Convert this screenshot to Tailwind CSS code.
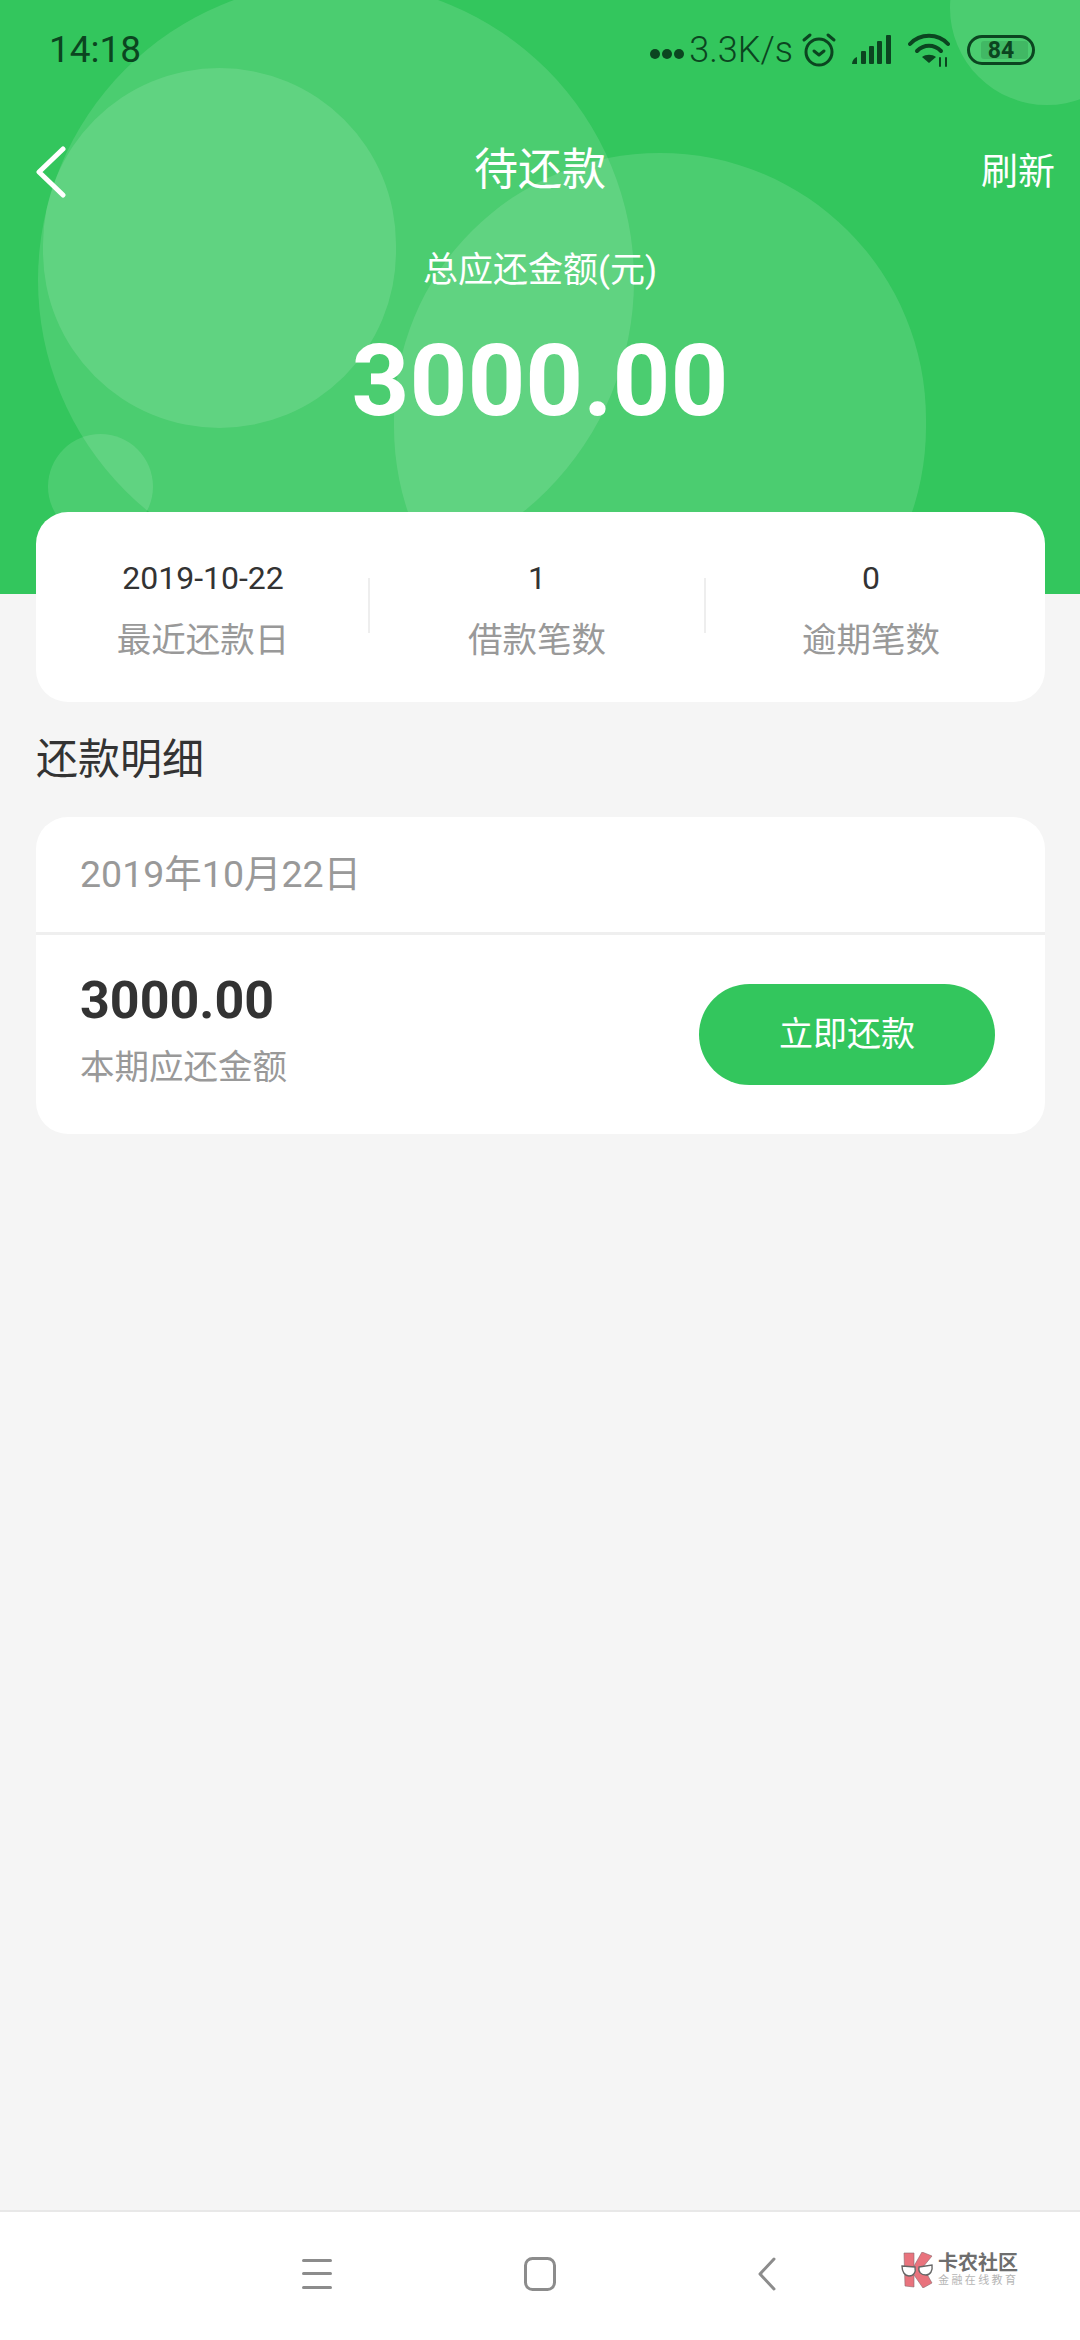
<!DOCTYPE html>
<html lang="zh-CN">
<head>
    <meta charset="UTF-8">
    <meta name="viewport" content="width=device-width, initial-scale=1.0">
    <title>待还款</title>
    <script src="https://cdn.jsdelivr.net/npm/@tailwindcss/browser@4"></script>
</head>
<body class="w-[1080px] h-[2340px] bg-[#f5f5f5] flex flex-col overflow-hidden font-['Roboto','Noto_Sans_CJK_SC',sans-serif]">
    <!-- Green header -->
    <header class="relative h-[594px] shrink-0 bg-[#33c65d] overflow-hidden text-white">
        <div class="absolute left-[38px] top-[-18px] w-[596px] h-[596px] rounded-full bg-white/12"></div>
        <div class="absolute left-[43px] top-[68px] w-[353px] h-[360px] rounded-full bg-white/12"></div>
        <div class="absolute left-[394px] top-[153px] w-[532px] h-[540px] rounded-full bg-white/12"></div>
        <div class="absolute left-[48px] top-[434px] w-[105px] h-[105px] rounded-full bg-white/12"></div>
        <div class="absolute left-[950px] top-[-89px] w-[194px] h-[194px] rounded-full bg-white/12"></div>

        <div class="relative">
            <!-- Status bar -->
            <div class="h-[146px] pt-[28px] pl-[49px] pr-[45px] flex items-start justify-between text-[#0b4520]">
                <span class="text-[37px] leading-[44px]">14:18</span>
                <div class="flex items-center h-[44px]">
                    <div class="flex gap-[2px] mr-[5px] mt-[8px]">
                        <span class="w-[10px] h-[10px] rounded-full bg-[#0b4520]"></span>
                        <span class="w-[10px] h-[10px] rounded-full bg-[#0b4520]"></span>
                        <span class="w-[10px] h-[10px] rounded-full bg-[#0b4520]"></span>
                    </div>
                    <span class="text-[36px] leading-[44px] font-light">3.3K/s</span>
                    <svg class="ml-[8px]" width="36" height="36" viewBox="0 0 36 36" fill="none" stroke="#0b4520" stroke-width="3" stroke-linecap="round" stroke-linejoin="round">
                        <circle cx="18" cy="20" r="13"/>
                        <path d="M13 19l5 4 5-4"/>
                        <path d="M3 8l6-5M33 8l-6-5"/>
                    </svg>
                    <svg class="ml-[15px]" width="40" height="30" viewBox="0 0 40 30" fill="#0b4520">
                        <path d="M0 29c0-3 2-6 5-7v7z"/>
                        <rect x="9" y="16" width="5" height="13" rx="1"/>
                        <rect x="17" y="11" width="5" height="18" rx="1"/>
                        <rect x="25" y="6" width="5" height="23" rx="1"/>
                        <rect x="34" y="0" width="5" height="29" rx="1"/>
                    </svg>
                    <svg class="ml-[16px]" width="44" height="34" viewBox="0 0 44 34" fill="none" stroke="#0b4520" stroke-linecap="round">
                        <path stroke-width="4" d="M2 11C12 0 30 0 40 11"/>
                        <path stroke-width="4" d="M9 18c7-7 17-7 24 0"/>
                        <path fill="#0b4520" stroke="none" d="M21 30l-7-6c4-3 10-3 14 0z"/>
                        <path stroke-width="2" d="M32 25v8M38 25v8"/>
                    </svg>
                    <div class="relative ml-[15px] w-[68px] h-[30px] rounded-full border-[3px] border-[#0b4520] flex items-center justify-center">
                        <div class="absolute left-[11px] top-[3px] w-[47px] h-[18px] rounded-[3px] bg-[#0b4520]/15"></div>
                        <span class="relative text-[23px] leading-none font-bold">84</span>
                    </div>
                </div>
            </div>

            <!-- Title row -->
            <div class="relative h-[48px] flex items-center justify-center">
                <svg class="absolute left-[34px] top-[0px]" width="34" height="52" viewBox="0 0 34 52" fill="none" stroke="#fff" stroke-width="5" stroke-linecap="round" stroke-linejoin="round">
                    <path d="M29 3L5 26l24 23"/>
                </svg>
                <span class="text-[44px] leading-[48px]">待还款</span>
                <span class="absolute right-[25px] top-[3px] text-[37px] leading-[48px]">刷新</span>
            </div>

            <!-- Total -->
            <div class="mt-[53px] text-center text-[35px] leading-[48px]">总应还金额(元)</div>
            <div class="mt-[28px] text-center text-[101px] leading-[116px] font-bold">3000.00</div>
        </div>
    </header>

    <main class="relative flex-1 px-[36px] -mt-[82px]">
        <!-- Summary card -->
        <section class="w-[1009px] h-[190px] bg-white rounded-[32px] pr-[7px] grid grid-cols-3 text-center">
            <div class="pt-[46px]">
                <p class="text-[32px] leading-[40px] text-[#333]">2019-10-22</p>
                <p class="mt-[18px] text-[34.5px] leading-[48px] text-[#999]">最近还款日</p>
            </div>
            <div class="relative pt-[46px]">
                <div class="absolute left-[-2px] top-[66px] w-[2px] h-[55px] bg-[#eee]"></div>
                <p class="text-[32px] leading-[40px] text-[#333]">1</p>
                <p class="mt-[18px] text-[34.5px] leading-[48px] text-[#999]">借款笔数</p>
            </div>
            <div class="relative pt-[46px]">
                <div class="absolute left-0 top-[66px] w-[2px] h-[55px] bg-[#eee]"></div>
                <p class="text-[32px] leading-[40px] text-[#333]">0</p>
                <p class="mt-[18px] text-[34.5px] leading-[48px] text-[#999]">逾期笔数</p>
            </div>
        </section>

        <h2 class="mt-[30px] text-[42px] leading-[56px] text-[#333]">还款明细</h2>

        <!-- Detail card -->
        <section class="mt-[29px] w-[1009px] h-[317px] bg-white rounded-[32px] overflow-hidden">
            <div class="h-[115px] pl-[44px] flex items-center border-b-[3px] border-[#efefef] box-content text-[37.5px] text-[#999]">2019年10月22日</div>
            <div class="pl-[44px] pr-[50px] pt-[36px] flex justify-between">
                <div>
                    <p class="text-[52px] leading-[60px] font-bold text-[#333]">3000.00</p>
                    <p class="mt-[12px] text-[34.5px] leading-[48px] text-[#999]">本期应还金额</p>
                </div>
                <button class="mt-[13px] w-[296px] h-[101px] rounded-full bg-[#33c65d] text-white text-[34px]">立即还款</button>
            </div>
        </section>
    </main>

    <!-- Navigation bar -->
    <nav class="h-[130px] shrink-0 bg-white border-t-2 border-[#e8e8e8] pl-[302px] flex items-center">
        <svg width="30" height="32" viewBox="0 0 30 32" fill="#8c8c8c" class="mt-[-4px]">
            <rect x="0" y="1" width="30" height="3" rx="1.5"/>
            <rect x="0" y="14" width="30" height="3" rx="1.5"/>
            <rect x="0" y="28" width="30" height="3" rx="1.5"/>
        </svg>
        <svg class="ml-[192px] mt-[-4px]" width="32" height="34" viewBox="0 0 32 34" fill="none" stroke="#8c8c8c" stroke-width="3">
            <rect x="1.5" y="1.5" width="29" height="31" rx="7"/>
        </svg>
        <svg class="ml-[202px] mt-[-4px]" width="18" height="34" viewBox="0 0 18 34" fill="none" stroke="#8c8c8c" stroke-width="3" stroke-linecap="round" stroke-linejoin="round">
            <path d="M16 2L2 17l14 15"/>
        </svg>
        <div class="ml-[125px] mt-[-12px] flex items-center">
            <svg width="34" height="36" viewBox="0 0 34 36">
                <path fill="#e9737d" stroke="#8a6a6e" stroke-width="0.6" d="M3 1h10v13l8-14 10 4-9 11 9 16-9 5-9-13v12l-9-1z"/>
                <path fill="#fff" stroke="#666" stroke-width="1.4" d="M1 14l13 1c1 5-1 9-6 9-4 0-7-4-7-10zM18 15l13-2c1 6-2 10-6 10-5 0-8-3-7-8z"/>
            </svg>
            <div class="ml-[3px] w-[82px]">
                <p class="text-[20px] leading-[21px] font-bold text-[#6e6e6e] whitespace-nowrap">卡农社区</p>
                <p class="text-[11px] leading-[14px] tracking-[2.4px] text-[#b5b5b5] whitespace-nowrap">金融在线教育</p>
            </div>
        </div>
    </nav>
</body>
</html>
